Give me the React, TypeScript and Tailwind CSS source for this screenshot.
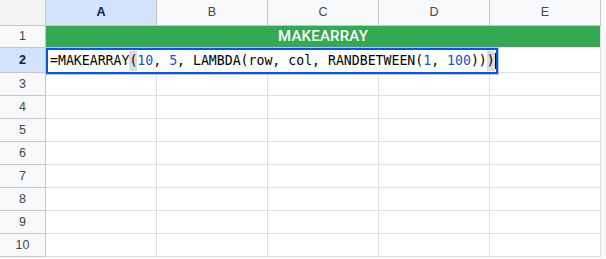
const cols = ["A", "B", "C", "D", "E"];

const ColHeader = ({ label, active }: { label: string; active?: boolean }) => (
  <div
    className={
      "w-[111px] shrink-0 flex items-center justify-center border-r border-b border-[#c4c7c5] " +
      (active ? "bg-[#d3e3fd] text-[#041e49] font-bold" : "bg-[#f8f9fa] text-[#444746]")
    }
  >
    {label}
  </div>
);

const RowHeader = ({ n, active }: { n: number; active?: boolean }) => (
  <div
    className={
      "w-[46px] shrink-0 flex items-center justify-center border-r border-b border-[#c4c7c5] " +
      (active ? "bg-[#d3e3fd] text-[#041e49] font-bold" : "bg-[#f8f9fa] text-[#444746]")
    }
  >
    {n}
  </div>
);

const EmptyRow = ({ n }: { n: number }) => (
  <div className="flex h-[23px]">
    <RowHeader n={n} />
    {cols.map((c) => (
      <div key={c} className="w-[111px] shrink-0 border-r border-b border-[#e1e1e1] bg-white" />
    ))}
  </div>
);

const Num = ({ children }: { children: string }) => (
  <span className="text-[#1155cc]">{children}</span>
);

export default function App() {
  return (
    <div className="w-[606px] h-[259px] overflow-hidden bg-[#f8f9fa] text-[12.5px] font-['Liberation_Sans',Arial,sans-serif]">
      {/* column headers */}
      <div className="flex h-[26px]">
        <div className="w-[46px] shrink-0 bg-[#f1f3f4] border-r border-b border-[#c4c7c5]" />
        {cols.map((c, i) => (
          <ColHeader key={c} label={c} active={i === 0} />
        ))}
      </div>

      {/* row 1: merged title */}
      <div className="flex h-[22px]">
        <RowHeader n={1} />
        <div className="w-[555px] shrink-0 bg-[#34a853] border-r border-b border-[#e1e1e1] flex items-center justify-center text-white text-[15px] font-medium font-['Roboto',sans-serif] tracking-[0.2px]">
          MAKEARRAY
        </div>
      </div>

      {/* row 2: editing cell */}
      <div className="relative flex h-[25px]">
        <RowHeader n={2} active />
        {cols.map((c) => (
          <div key={c} className="w-[111px] shrink-0 border-r border-b border-[#e1e1e1] bg-white" />
        ))}
        <div className="absolute left-[46px] top-[0px] w-[452px] h-[26px] border-2 border-[#0b57d0] bg-white shadow-[0_0_0_1px_#a8c7fa] flex items-center pl-[2px] font-['DejaVu_Sans_Mono',monospace] text-[13.2px] text-[#000] whitespace-pre">
          <span>=MAKEARRAY</span>
          <span className="bg-[#dadce0]">(</span>
          <Num>10</Num>
          <span>, </span>
          <Num>5</Num>
          <span>, LAMBDA(row, col, RANDBETWEEN(</span>
          <Num>1</Num>
          <span>, </span>
          <Num>100</Num>
          <span>))</span>
          <span className="bg-[#dadce0]">)</span>
          <span className="w-px h-[16px] bg-black" />
        </div>
      </div>

      {[3, 4, 5, 6, 7, 8, 9, 10].map((n) => (
        <EmptyRow key={n} n={n} />
      ))}
    </div>
  );
}
